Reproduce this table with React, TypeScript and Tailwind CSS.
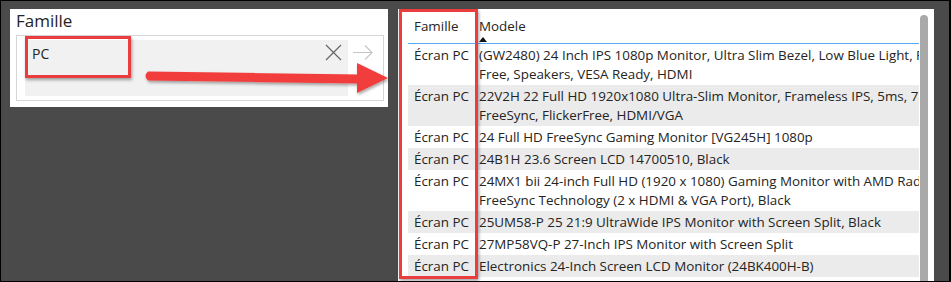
import React from 'react';

const font = { fontFamily: '"Open Sans", "Noto Sans", sans-serif' };

const rows: string[][] = [
  ['(GW2480) 24 Inch IPS 1080p Monitor, Ultra Slim Bezel, Low Blue Light, Flicker-', 'Free, Speakers, VESA Ready, HDMI'],
  ['22V2H 22 Full HD 1920x1080 Ultra-Slim Monitor, Frameless IPS, 5ms, 75Hz, AMD', 'FreeSync, FlickerFree, HDMI/VGA'],
  ['24 Full HD FreeSync Gaming Monitor [VG245H] 1080p'],
  ['24B1H 23.6 Screen LCD 14700510, Black'],
  ['24MX1 bii 24-inch Full HD (1920 x 1080) Gaming Monitor with AMD Radeon', 'FreeSync Technology (2 x HDMI & VGA Port), Black'],
  ['25UM58-P 25 21:9 UltraWide IPS Monitor with Screen Split, Black'],
  ['27MP58VQ-P 27-Inch IPS Monitor with Screen Split'],
  ['Electronics 24-Inch Screen LCD Monitor (24BK400H-B)'],
];

const SlicerCard = () => (
  <div className="w-[378px] h-[98px] bg-white flex flex-col shrink-0">
    <div className="pl-[6px] h-[26px] text-[17px] leading-[24px] text-[#252423]">Famille</div>
    <div className="ml-[6px] w-[368px] h-[66px] border border-[#d6d6d6] flex items-start pl-[8px] pt-[4px]">
      <div className="w-[323px] h-[56px] bg-[#f1f1f1] flex items-start justify-between pl-[7px] pr-[6px] pt-[5px]">
        <span className="text-[14px] leading-[18px] text-[#252423]">PC</span>
        <svg width="17" height="17" viewBox="0 0 17 17" className="mt-[-1px]">
          <path d="M1 1 L16 16 M16 1 L1 16" stroke="#666" strokeWidth="1.2" fill="none" />
        </svg>
      </div>
      <svg width="22" height="17" viewBox="0 0 22 17" className="ml-[4px] mt-[4px]">
        <path d="M1 8.5 H20 M13 1.5 L20 8.5 L13 15.5" stroke="#c6c6c6" strokeWidth="1.2" fill="none" />
      </svg>
    </div>
  </div>
);

const TableCard = () => (
  <div className="w-[536px] h-[290px] bg-white flex shrink-0 ml-[10px]">
    <div className="w-[511px] ml-[10px] text-[13.4px] text-[#252423]">
      <div className="flex h-[35px] border-b border-[#5aaaf2]">
        <div className="w-[66px] pl-[6px] pt-[8px] leading-[19px]">Famille</div>
        <div className="pl-[5px] pt-[8px] leading-[19px] flex flex-col">
          <span>Modele</span>
          <span className="block w-0 h-0 mt-[1px] border-l-[4px] border-r-[4px] border-b-[5px] border-l-transparent border-r-transparent border-b-[#111]" />
        </div>
      </div>
      {rows.map((lines, i) => (
        <div key={i} className={`flex py-[1.5px] leading-[19px] ${i % 2 === 1 ? 'bg-[#ebebeb]' : 'bg-white'}`}>
          <div className="w-[66px] pl-[6px] whitespace-nowrap">Écran PC</div>
          <div className="flex-1 pl-[5px] overflow-hidden">
            {lines.map((l, j) => (
              <div key={j} className="whitespace-nowrap">{l}</div>
            ))}
          </div>
        </div>
      ))}
    </div>
    <div className="ml-[1px] mt-[6px] w-[8px] h-[300px] rounded-t-full bg-[#a9a9a9]" />
  </div>
);

export default function App() {
  return (
    <div style={font} className="relative w-[951px] h-[282px] overflow-hidden bg-[#4a4a4a] border border-black border-r-2">
      <div className="flex items-start pl-[9px] pt-[8px]">
        <SlicerCard />
        <TableCard />
      </div>

      {/* annotations */}
      <div className="absolute left-[24px] top-[35px] w-[106px] h-[42px] border-[3px] border-[#ea3d3d] shadow-[1px_2px_3px_rgba(0,0,0,0.35)]" />
      <div className="absolute left-[398px] top-[8px] w-[79px] h-[270px] border-[3px] border-[#ea3d3d] shadow-[1px_2px_3px_rgba(0,0,0,0.35)]" />
      <svg className="absolute left-[135px] top-[57px]" width="260" height="40" viewBox="0 0 260 40">
        <defs>
          <filter id="sh" x="-10%" y="-30%" width="120%" height="160%">
            <feDropShadow dx="1" dy="2" stdDeviation="1.5" floodColor="#000" floodOpacity="0.35" />
          </filter>
        </defs>
        <g filter="url(#sh)" fill="#f23e3e">
          <path d="M12 13.5 L224 16.5 L224 25.5 L12 22.5 Q7 18 12 13.5 Z" />
          <path d="M221 5 L252 20 L221 35 Z" />
        </g>
      </svg>
    </div>
  );
}
